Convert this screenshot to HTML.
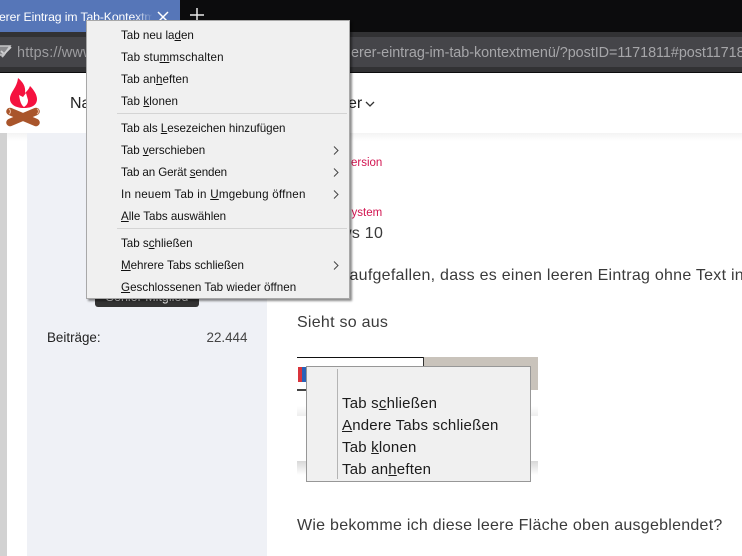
<!DOCTYPE html>
<html lang="de"><head><meta charset="utf-8"><title>Tab-Kontextmenü</title>
<style>
html,body{margin:0;padding:0;width:742px;height:556px;overflow:hidden;background:#fff}
body{position:relative;font-family:"Liberation Sans",sans-serif;color:#333}
.a{position:absolute;white-space:nowrap}
.m{font-size:11.6px;color:#111;left:121px;height:16px;line-height:16px;letter-spacing:.1px}
.m u{text-underline-offset:1px}
.arr{position:absolute;left:332.5px;width:6px;height:9px}
.b{font-size:16px;letter-spacing:.26px;color:#3a3a3a}
.c{font-size:15px;color:#1c1c1c;left:342px;line-height:22px;height:22px;letter-spacing:.2px}
</style></head>
<body>
<!-- tab bar -->
<div class="a" style="left:0;top:0;width:742px;height:32px;background:#0c0c0d"></div>
<div class="a" style="left:0;top:0;width:180px;height:32px;background:#5676b8"></div>
<div class="a" style="left:-1px;top:8px;width:153px;height:18px;overflow:hidden;color:#fff;font-size:12.2px;line-height:18px;letter-spacing:-.1px">erer Eintrag im Tab-Kontextm</div>
<div class="a" style="left:135px;top:8px;width:18px;height:18px;background:linear-gradient(90deg,rgba(86,118,184,0),#5676b8)"></div>
<svg class="a" style="left:156px;top:10px" width="14" height="14" viewBox="0 0 14 14"><path d="M2 2L12 12M12 2L2 12" stroke="#fff" stroke-width="1.5" fill="none"/></svg>
<svg class="a" style="left:190px;top:8px" width="14" height="14" viewBox="0 0 14 14"><path d="M7 0V14M0 7H14" stroke="#e8e8e8" stroke-width="1.5" fill="none"/></svg>
<!-- url bar -->
<div class="a" style="left:0;top:32px;width:742px;height:41px;background:#323234"></div>
<div class="a" style="left:0;top:37px;width:742px;height:30px;background:#454549"></div>
<div class="a" style="left:0;top:72px;width:742px;height:1px;background:#0c0c0d"></div>
<svg class="a" style="left:0;top:44px" width="12" height="16" viewBox="0 0 12 16"><path d="M-2 2H10L4 11H-2Z" fill="#8a8a8d" stroke="#c4c4c6" stroke-width="1.6"/><path d="M1 7L4 10L11 3" fill="none" stroke="#d0d0d2" stroke-width="1.8"/><path d="M2 13L5 9" stroke="#c4c4c6" stroke-width="2"/></svg>
<div class="a" style="left:17px;top:44px;font-size:14.4px;line-height:18px;color:#9d9da0;letter-spacing:.2px">https://www</div>
<div class="a" style="left:351px;top:44px;font-size:14.4px;line-height:18px;color:#a6a6a9;letter-spacing:-.05px">erer-eintrag-im-tab-kontextmenü/?postID=1171811#post11718</div>
<!-- site header -->
<div class="a" style="left:0;top:73px;width:742px;height:60px;background:#fff"></div>
<div class="a" style="left:0;top:133px;width:742px;height:8px;background:linear-gradient(#f3f3f3,#fff)"></div>
<svg class="a" style="left:6px;top:77px" width="35" height="50" viewBox="0 0 35 50">
<path d="M12 1C17 5 20 10 19 16C21 14 23 12 24 9C28 13 31 18 31 22C31 28 26 31 18 31C9 31 4 27 4 22C4 15 11 11 12 1Z" fill="#f5123f"/>
<path d="M13 18L17 20L20 16L22 23C22 26 21 28 18 30C15 28 14 24 13 18Z" fill="#fff"/>
<path d="M4 34.5L30 45.5" stroke="#a9552b" stroke-width="7.5" stroke-linecap="round"/>
<path d="M30 34.5L4 45.5" stroke="#a9552b" stroke-width="7.5" stroke-linecap="round"/>
<path d="M3 32C5 33 5 36 3 37" stroke="#e9b79b" fill="none"/>
<path d="M31 32C33 33 33 36 31 37" stroke="#e9b79b" fill="none"/>
</svg>
<div class="a" style="left:70px;top:94px;font-size:16px;line-height:20px;color:#222">Na</div>
<div class="a" style="left:348px;top:94px;font-size:16px;line-height:20px;color:#222">er</div>
<svg class="a" style="left:365px;top:101px" width="10" height="7" viewBox="0 0 10 7"><path d="M1 1L5 5L9 1" stroke="#333" stroke-width="1.3" fill="none"/></svg>
<!-- sidebar -->
<div class="a" style="left:0;top:133px;width:7px;height:423px;background:#d2d2d2"></div>
<div class="a" style="left:27px;top:133px;width:240px;height:423px;background:#eff1f6"></div>
<div class="a" style="left:95px;top:283px;width:104px;height:24px;background:#333;border-radius:3px;color:#e6e6e6;font-size:12.5px;line-height:29px;text-align:center;overflow:hidden">Senior Mitglied</div>
<div class="a" style="left:47px;top:329px;font-size:13.4px;line-height:17px;color:#222">Beiträge:</div>
<div class="a" style="left:206.5px;top:329px;font-size:13.4px;line-height:17px;color:#444">22.444</div>
<!-- post -->
<div class="a" style="left:351px;top:155px;font-size:11.5px;line-height:16px;color:#d21450">ersion</div>
<div class="a" style="left:351.5px;top:205px;font-size:11.5px;line-height:16px;color:#d21450">ystem</div>
<div class="a b" style="left:340px;top:224px;line-height:20px">ws 10</div>
<div class="a b" style="left:349.5px;top:266px;line-height:20px">aufgefallen, dass es einen leeren Eintrag ohne Text in</div>
<div class="a b" style="left:297px;top:313px;line-height:20px">Sieht so aus</div>
<div class="a b" style="left:297px;top:516px;line-height:20px">Wie bekomme ich diese leere Fläche oben ausgeblendet?</div>
<!-- embedded screenshot -->
<div class="a" style="left:424px;top:357px;width:114px;height:33px;background:#c9c3bb"></div>
<div class="a" style="left:297px;top:357px;width:127px;height:1px;background:#111"></div>
<div class="a" style="left:423px;top:357px;width:1px;height:10px;background:#333"></div>
<div class="a" style="left:297px;top:389px;width:10px;height:2px;background:#444"></div>
<div class="a" style="left:298px;top:367px;width:4px;height:15px;background:#d9343c"></div>
<div class="a" style="left:302px;top:367px;width:5px;height:15px;background:#2a62b8"></div>
<div class="a" style="left:297px;top:406px;width:10px;height:10px;background:linear-gradient(#fff,#eee)"></div>
<div class="a" style="left:530px;top:406px;width:8px;height:10px;background:linear-gradient(#fff,#eee)"></div>
<div class="a" style="left:297px;top:461px;width:10px;height:14px;background:linear-gradient(#d8d8d8,#fff)"></div>
<div class="a" style="left:530px;top:461px;width:8px;height:14px;background:linear-gradient(#d8d8d8,#fff)"></div>
<div class="a" style="left:306px;top:366px;width:223px;height:114px;background:#f0f0f0;border:1px solid #979797"></div>
<div class="a" style="left:337px;top:369px;width:1px;height:110px;background:#b4b4b4"></div>
<div class="a c" style="top:393px">Tab s<u>c</u>hließen</div>
<div class="a c" style="top:415px"><u>A</u>ndere Tabs schließen</div>
<div class="a c" style="top:437px">Tab <u>k</u>lonen</div>
<div class="a c" style="top:459px">Tab an<u>h</u>eften</div>
<!-- context menu -->
<div class="a" style="left:86px;top:20px;width:262px;height:277px;background:#f0f0f0;border:1px solid #a8a8a8;box-shadow:2px 2px 2px rgba(0,0,0,.45)"></div>
<div class="a" style="left:117px;top:113px;width:230px;height:1px;background:#d4d4d4"></div>
<div class="a" style="left:117px;top:228px;width:230px;height:1px;background:#d4d4d4"></div>
<div class="a m" style="top:28px;letter-spacing:0">Tab neu la<u>d</u>en</div>
<div class="a m" style="top:50px;letter-spacing:.17px">Tab stu<u>m</u>mschalten</div>
<div class="a m" style="top:72px;letter-spacing:.03px">Tab an<u>h</u>eften</div>
<div class="a m" style="top:94px;letter-spacing:.1px">Tab <u>k</u>lonen</div>
<div class="a m" style="top:121px;letter-spacing:-.02px">Tab als <u>L</u>esezeichen hinzufügen</div>
<div class="a m" style="top:143px;letter-spacing:-.02px">Tab <u>v</u>erschieben</div>
<div class="a m" style="top:165px;letter-spacing:-.12px">Tab an Gerät <u>s</u>enden</div>
<div class="a m" style="top:187px;letter-spacing:.23px">In neuem Tab in <u>U</u>mgebung öffnen</div>
<div class="a m" style="top:209px;letter-spacing:-.02px"><u>A</u>lle Tabs auswählen</div>
<div class="a m" style="top:236px;letter-spacing:0">Tab s<u>c</u>hließen</div>
<div class="a m" style="top:258px;letter-spacing:-.03px"><u>M</u>ehrere Tabs schließen</div>
<div class="a m" style="top:280px;letter-spacing:.03px"><u>G</u>eschlossenen Tab wieder öffnen</div>
<svg class="arr" style="top:145.5px" viewBox="0 0 6 9"><path d="M1 .5L5 4.5L1 8.5" stroke="#444" fill="none"/></svg>
<svg class="arr" style="top:167.5px" viewBox="0 0 6 9"><path d="M1 .5L5 4.5L1 8.5" stroke="#444" fill="none"/></svg>
<svg class="arr" style="top:189.5px" viewBox="0 0 6 9"><path d="M1 .5L5 4.5L1 8.5" stroke="#444" fill="none"/></svg>
<svg class="arr" style="top:260.5px" viewBox="0 0 6 9"><path d="M1 .5L5 4.5L1 8.5" stroke="#444" fill="none"/></svg>
</body></html>
